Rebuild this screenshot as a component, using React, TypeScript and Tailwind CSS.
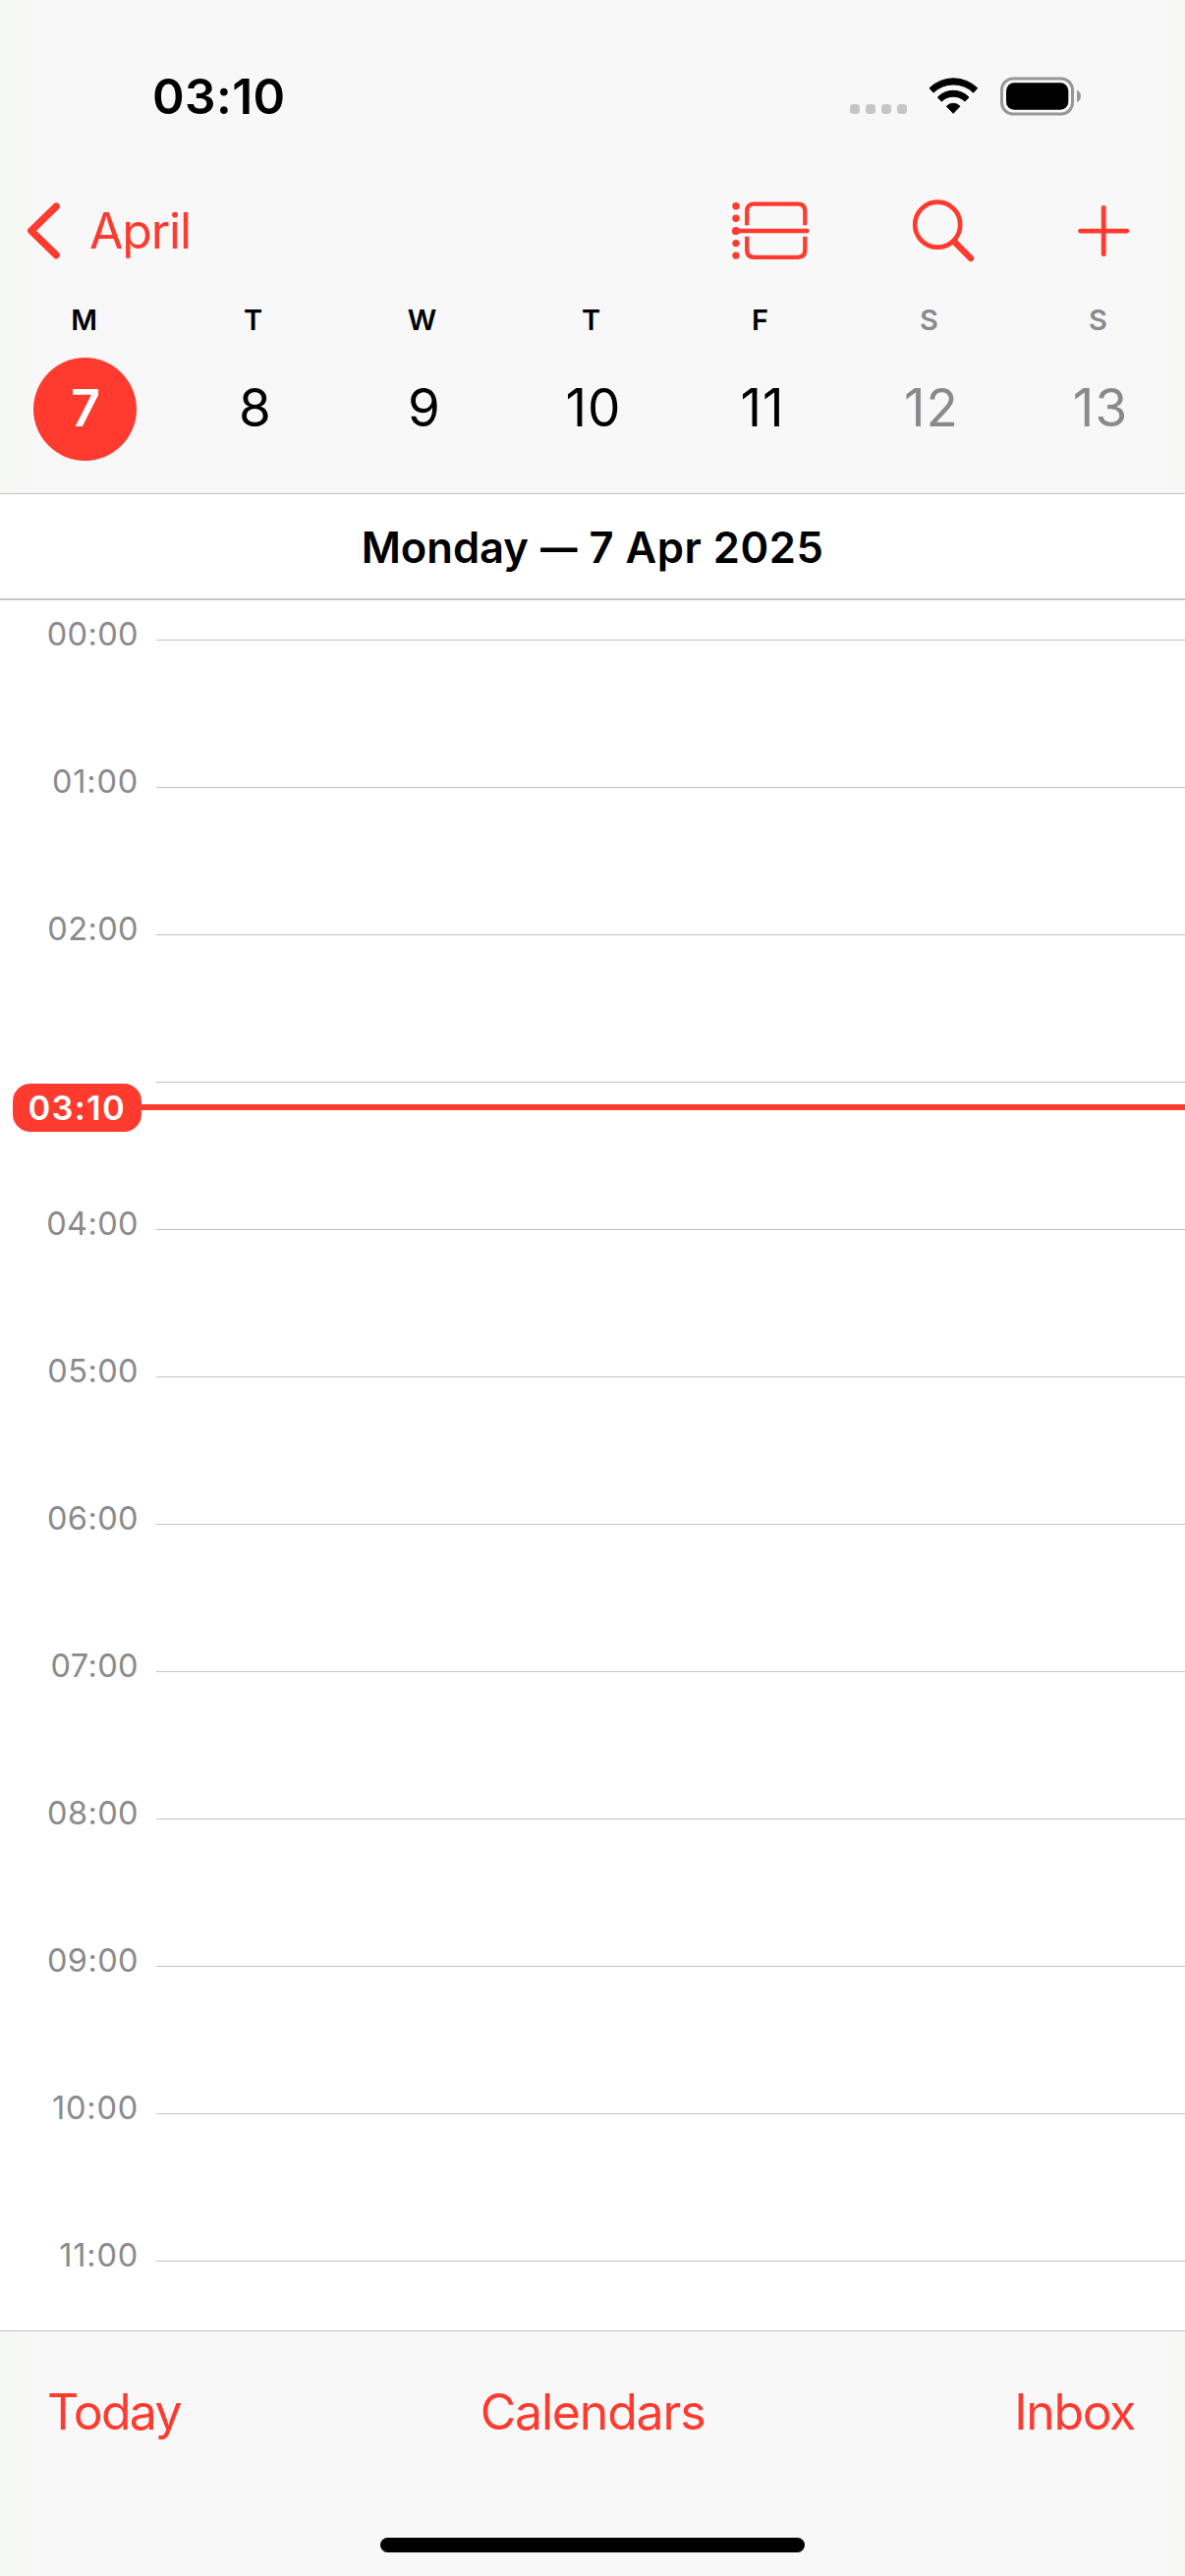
const DAYS = [
  { letter: "M", date: 7, today: true },
  { letter: "T", date: 8 },
  { letter: "W", date: 9 },
  { letter: "T", date: 10 },
  { letter: "F", date: 11 },
  { letter: "S", date: 12, weekend: true },
  { letter: "S", date: 13, weekend: true },
];

// The 03:00 label is hidden while the current-time pill covers it.
const HOURS = ["00:00", "01:00", "02:00", "", "04:00", "05:00", "06:00", "07:00", "08:00", "09:00", "10:00", "11:00"];

const BAR = "bg-[linear-gradient(90deg,#f6f8f5_0px,#f8f8f8_50px,#f8f8f8_1156px,#f7f8f6_1206px)]";

function StatusIcons() {
  return (
    <div className="flex items-center">
      <div className="mt-[26px] flex gap-[6px]">
        {[0, 1, 2, 3].map((i) => (
          <span key={i} className="size-[10px] rounded-[3.5px] bg-[#c6c6c6]" />
        ))}
      </div>
      <svg className="ml-[21px] h-[40px] w-[52px]" viewBox="313 54 156 120">
        <g fill="#000" stroke="#000" strokeWidth="3" strokeLinejoin="round">
          <path d="M319 88 A105 105 0 0 1 465 88 L453 101.500 A88 88 0 0 0 331 101.500 Z" transform="translate(0 1)" />
          <path d="M344 117 A66 66 0 0 1 439 117 L427 129.500 A50 50 0 0 0 356 129.500 Z" />
          <path d="M371 144.500 A29 29 0 0 1 412 144.500 L391.500 166 Z" />
        </g>
      </svg>
      <svg className="ml-[21px] h-[40px] w-[84px]" viewBox="1017 77.500 84 40">
        <rect x="1019.500" y="79.500" width="72" height="36" rx="11.500" fill="none" stroke="#979797" strokeWidth="3" />
        <rect x="1024" y="83.800" width="63.300" height="27.400" rx="8" fill="#000" />
        <path d="M1096 91.300 C1101.300 93.500 1101.300 101.300 1096 103.500 Z" fill="#979797" />
      </svg>
    </div>
  );
}

function BackIcon() {
  return (
    <svg className="h-[60px] w-[36px]" viewBox="27 204.700 36 60" fill="none" stroke="#ff3b30" strokeWidth="7.400" strokeLinecap="round" strokeLinejoin="round">
      <path d="M57.200 209.900 L31.800 234.600 L57.200 259.300" />
    </svg>
  );
}

function ListViewIcon() {
  return (
    <svg className="h-[60px] w-[80px]" viewBox="745 204.700 80 60" fill="none" stroke="#ff3b30" strokeWidth="4.300">
      <g fill="#ff3b30" stroke="none">
        <circle cx="749" cy="209.400" r="3.700" />
        <circle cx="749" cy="222" r="3.700" />
        <circle cx="749" cy="234.700" r="4.100" />
        <circle cx="749" cy="247.300" r="3.700" />
        <circle cx="749" cy="259.800" r="3.700" />
      </g>
      <path d="M760.200 229 V214.700 Q760.200 207.400 767.500 207.400 H812 Q819.300 207.400 819.300 214.700 V229" />
      <path d="M760.200 240.400 V254.200 Q760.200 261.500 767.500 261.500 H812 Q819.300 261.500 819.300 254.200 V240.400" />
      <path d="M749 234.700 H821.600" strokeLinecap="round" />
    </svg>
  );
}

function SearchIcon() {
  return (
    <svg className="h-[66px] w-[66px]" viewBox="927 201.700 66 66" fill="none" stroke="#ff3b30">
      <circle cx="954.200" cy="228.400" r="23" strokeWidth="4.700" />
      <path d="M970.800 245.200 L972.200 246.600" strokeWidth="6.400" />
      <path d="M972 246.400 L988 262.700" strokeWidth="6.400" strokeLinecap="round" />
    </svg>
  );
}

function PlusIcon() {
  return (
    <svg className="size-[56px]" viewBox="1095 206.700 56 56" fill="none" stroke="#ff3b30" strokeWidth="4.900" strokeLinecap="round">
      <path d="M1099.500 234.800 H1146.900 M1123.200 211.100 V258.500" />
    </svg>
  );
}

export default function App() {
  return (
    <div className="flex h-[2622px] w-[1206px] flex-col overflow-hidden bg-white font-['Inter','Liberation_Sans',sans-serif] text-black">
      <header className={`${BAR} h-[503px] shrink-0 border-b border-[#c2c3c4]`}>
        <div className="flex h-[196px] items-center justify-between pr-[105px] pl-[155px]">
          <span className="text-[49.5px] font-semibold tracking-[0.4px]">03:10</span>
          <StatusIcons />
        </div>

        <nav className="flex h-[78px] items-center pl-[27px] text-[#ff3b30]">
          <button className="flex items-center gap-[28px]">
            <BackIcon />
            <span className="text-[50px] leading-[60px] tracking-[-1.2px]">April</span>
          </button>
          <div className="mr-[55px] ml-auto flex items-center gap-[102px]">
            <ListViewIcon />
            <SearchIcon />
            <PlusIcon />
          </div>
        </nav>

        <div className="grid w-[1204px] grid-cols-7">
          {DAYS.map((d, i) => (
            <div key={i} className={`flex flex-col items-center ${d.weekend ? "text-[#8a8a8e]" : ""}`}>
              <span className="mr-[1px] h-[90px] pt-[13px] text-[29px] leading-[78px] font-semibold">{d.letter}</span>
              <span
                className={`flex size-[105px] items-center justify-center rounded-full pb-[2px] ${
                  d.today ? "bg-[#ff3b30] pl-[2px] text-[52.3px] font-semibold text-white" : "ml-[4px] pb-[1px] text-[53px] tracking-[1px]"
                }`}
              >
                {d.date}
              </span>
            </div>
          ))}
        </div>
      </header>

      <h1 className="h-[108px] shrink-0 border-b-2 border-[#c6c6c8] pt-[3px] text-center text-[43.6px] leading-[104px] font-semibold">
        <span className="tracking-[-0.05px]">Monday</span> <span className="-mx-[2px] inline-block scale-x-[0.86]">—</span>{" "}
        <span className="tracking-[0.5px]">7 Apr 2025</span>
      </h1>

      <main className="relative min-h-0 flex-1 overflow-hidden">
        <div className="-mt-[35px]">
          {HOURS.map((h, i) => (
            <div key={i} className="flex h-[150px]">
              <span
                className={`mt-[50px] w-[159px] pr-[18px] text-right text-[32.5px] leading-[40px] text-[#8a8a8e] ${
                  h.includes("1") ? "tracking-[0.8px]" : "tracking-[0.4px]"
                }`}
              >
                {h}
              </span>
              <span className="mt-[75px] h-px flex-1 bg-[#c4c4c6]" />
            </div>
          ))}
        </div>
        <div className="absolute top-[492px] right-0 left-[13px] flex items-center">
          <span className="h-[49px] w-[131px] rounded-[18px] bg-[#ff3b30] pl-[15.5px] text-[34.5px] leading-[49px] font-semibold tracking-[1.3px] text-white">03:10</span>
          <span className="-mt-px h-[6px] flex-1 bg-[#ff3b30]" />
        </div>
      </main>

      <footer className={`${BAR} h-[250px] shrink-0 border-t border-[#c4c4c6]`}>
        <div className="grid h-[164px] grid-cols-3 items-center text-[50px] text-[#ff3b30]">
          <button className="pl-[48px] text-left tracking-[-1.7px]">Today</button>
          <button className="text-center tracking-[-1.18px]">Calendars</button>
          <button className="pr-[51px] text-right tracking-[-1.4px]">Inbox</button>
        </div>
        <div className="mx-auto mt-[46px] h-[15px] w-[432px] rounded-full bg-black" />
      </footer>
    </div>
  );
}
